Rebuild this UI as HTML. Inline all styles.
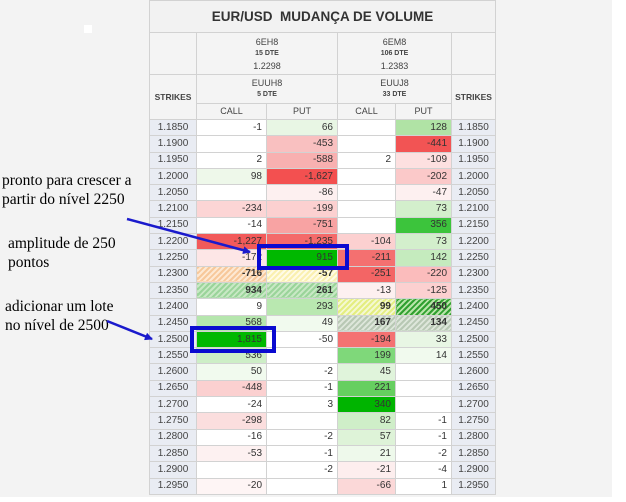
<!DOCTYPE html>
<html><head><meta charset="utf-8"><style>
body{margin:0;width:626px;height:502px;background:#fff;position:relative;overflow:hidden;font-family:"Liberation Sans",sans-serif}
#bg{position:absolute;left:0;top:0;width:612px;height:497px;background:#f3f3f3}
.h{position:absolute;box-sizing:border-box;border:1px solid #d2d2d2;background:#f4f4f4;color:#444;text-align:center;font-size:9px}
table{position:absolute;left:149px;top:119px;border-collapse:collapse;table-layout:fixed;font-size:10px;color:#333}
td{border:1px solid #d2d2d2;height:15.3px;padding:0 4px 0 0;text-align:right;background:#fff;line-height:14px;white-space:nowrap;overflow:hidden}
td.s{background:#e9ecf3;text-align:center;padding:0;color:#444}
.b{font-weight:bold}
.t{position:absolute;font-family:"Liberation Serif",serif;font-size:15.5px;color:#000;line-height:19px}
.box{position:absolute;border:4px solid #0a0ad0;box-sizing:border-box}
.so{background:repeating-linear-gradient(135deg,#f7c89a 0 2px,#fde8d2 2px 4px)}
.sy{background:repeating-linear-gradient(135deg,#faf0b0 0 2px,#fffbe6 2px 4px)}
.sg{background:repeating-linear-gradient(135deg,#9ad49a 0 2px,#c8e8c4 2px 4px)}
.syg{background:repeating-linear-gradient(135deg,#e4ee80 0 2px,#f4f8d0 2px 4px)}
.sdg{background:repeating-linear-gradient(135deg,#30a030 0 2px,#b8e4a8 2px 4px)}
.sgr{background:repeating-linear-gradient(135deg,#b8c8b4 0 2px,#dde6da 2px 4px)}
</style></head><body>
<div id="bg"></div>
<div style="position:absolute;left:84px;top:25px;width:8px;height:8px;background:#fff"></div>

<div class="h" style="left:149px;top:0;width:347px;height:33px;font-size:13.5px;font-weight:bold;line-height:31px;color:#333;background:#f2f2f2">EUR/USD&nbsp; MUDANÇA DE VOLUME</div>
<div class="h" style="left:149px;top:32px;width:48px;height:43px"></div>
<div class="h" style="left:196px;top:32px;width:142px;height:43px;padding-top:4px;line-height:10px">6EH8<br><span style="font-size:7px;font-weight:bold">15 DTE</span><br><span style="line-height:15px">1.2298</span></div>
<div class="h" style="left:337px;top:32px;width:115px;height:43px;padding-top:4px;line-height:10px">6EM8<br><span style="font-size:7px;font-weight:bold">106 DTE</span><br><span style="line-height:15px">1.2383</span></div>
<div class="h" style="left:451px;top:32px;width:45px;height:43px"></div>
<div class="h" style="left:149px;top:74px;width:48px;height:46px;font-weight:bold;line-height:44px;font-size:8.5px">STRIKES</div>
<div class="h" style="left:451px;top:74px;width:45px;height:46px;font-weight:bold;line-height:44px;font-size:8.5px">STRIKES</div>
<div class="h" style="left:196px;top:74px;width:142px;height:30px;padding-top:3px;line-height:10px">EUUH8<br><span style="font-size:7px;font-weight:bold">5 DTE</span></div>
<div class="h" style="left:337px;top:74px;width:115px;height:30px;padding-top:3px;line-height:10px">EUUJ8<br><span style="font-size:7px;font-weight:bold">33 DTE</span></div>
<div class="h" style="left:196px;top:103px;width:71px;height:17px;line-height:15px">CALL</div>
<div class="h" style="left:266px;top:103px;width:72px;height:17px;line-height:15px">PUT</div>
<div class="h" style="left:337px;top:103px;width:59px;height:17px;line-height:15px">CALL</div>
<div class="h" style="left:395px;top:103px;width:57px;height:17px;line-height:15px">PUT</div>

<table>
<colgroup><col style="width:47px"><col style="width:70px"><col style="width:71px"><col style="width:58px"><col style="width:56px"><col style="width:44px"></colgroup>
<tr><td class="s">1.1850</td><td>-1</td><td style="background:#e8f6e4">66</td><td></td><td style="background:#b0e3a5">128</td><td class="s">1.1850</td></tr>
<tr><td class="s">1.1900</td><td></td><td style="background:#f9c0c0">-453</td><td></td><td style="background:#f25454">-441</td><td class="s">1.1900</td></tr>
<tr><td class="s">1.1950</td><td>2</td><td style="background:#f8b0b0">-588</td><td>2</td><td style="background:#fde0e0">-109</td><td class="s">1.1950</td></tr>
<tr><td class="s">1.2000</td><td style="background:#eef8ea">98</td><td style="background:#f35050">-1,627</td><td></td><td style="background:#fbc9c9">-202</td><td class="s">1.2000</td></tr>
<tr><td class="s">1.2050</td><td></td><td style="background:#fdf0f0">-86</td><td></td><td style="background:#fdf0f0">-47</td><td class="s">1.2050</td></tr>
<tr><td class="s">1.2100</td><td style="background:#fcd5d5">-234</td><td style="background:#fcd0d0">-199</td><td></td><td style="background:#d3efcc">73</td><td class="s">1.2100</td></tr>
<tr><td class="s">1.2150</td><td>-14</td><td style="background:#f8a3a3">-751</td><td></td><td style="background:#3cc43c">356</td><td class="s">1.2150</td></tr>
<tr><td class="s">1.2200</td><td style="background:#f25a5a">-1,227</td><td style="background:#f46a6a">-1,235</td><td style="background:#fcd0d0">-104</td><td style="background:#d3efcc">73</td><td class="s">1.2200</td></tr>
<tr><td class="s">1.2250</td><td style="background:#fde6e6">-172</td><td style="background:#00b800">915</td><td style="background:#f47070">-211</td><td style="background:#c5ebbe">142</td><td class="s">1.2250</td></tr>
<tr><td class="s">1.2300</td><td class="so b">-716</td><td class="sy b">-57</td><td style="background:#f36565">-251</td><td style="background:#fbbcbc">-220</td><td class="s">1.2300</td></tr>
<tr><td class="s">1.2350</td><td class="sg b">934</td><td class="sg b">261</td><td style="background:#fdf0f0">-13</td><td style="background:#fcd0d0">-125</td><td class="s">1.2350</td></tr>
<tr><td class="s">1.2400</td><td>9</td><td style="background:#b9e8b0">293</td><td class="syg b">99</td><td class="sdg b">450</td><td class="s">1.2400</td></tr>
<tr><td class="s">1.2450</td><td style="background:#b5e6ad">568</td><td style="background:#f1faee">49</td><td class="sgr b">167</td><td class="sgr b">134</td><td class="s">1.2450</td></tr>
<tr><td class="s">1.2500</td><td style="background:#00b800">1,815</td><td>-50</td><td style="background:#f47272">-194</td><td style="background:#e8f6e4">33</td><td class="s">1.2500</td></tr>
<tr><td class="s">1.2550</td><td style="background:#cdeec6">536</td><td></td><td style="background:#7fd87a">199</td><td style="background:#f1faee">14</td><td class="s">1.2550</td></tr>
<tr><td class="s">1.2600</td><td style="background:#f1faee">50</td><td>-2</td><td style="background:#e0f4db">45</td><td></td><td class="s">1.2600</td></tr>
<tr><td class="s">1.2650</td><td style="background:#fbd0d0">-448</td><td>-1</td><td style="background:#66cf60">221</td><td></td><td class="s">1.2650</td></tr>
<tr><td class="s">1.2700</td><td>-24</td><td>3</td><td style="background:#00b400">340</td><td></td><td class="s">1.2700</td></tr>
<tr><td class="s">1.2750</td><td style="background:#fbdede">-298</td><td></td><td style="background:#cfeec8">82</td><td>-1</td><td class="s">1.2750</td></tr>
<tr><td class="s">1.2800</td><td>-16</td><td>-2</td><td style="background:#def3d8">57</td><td>-1</td><td class="s">1.2800</td></tr>
<tr><td class="s">1.2850</td><td style="background:#fdf1f1">-53</td><td>-1</td><td style="background:#eef9eb">21</td><td>-2</td><td class="s">1.2850</td></tr>
<tr><td class="s">1.2900</td><td></td><td>-2</td><td style="background:#fdeeee">-21</td><td>-4</td><td class="s">1.2900</td></tr>
<tr><td class="s">1.2950</td><td style="background:#fef5f5">-20</td><td></td><td style="background:#fbd8d8">-66</td><td>1</td><td class="s">1.2950</td></tr>
</table>

<div class="box" style="left:257px;top:244px;width:92px;height:26px"></div>
<div class="box" style="left:190px;top:326px;width:86px;height:27px"></div>

<div class="t" style="left:2px;top:171px">pronto para crescer a<br>partir do nível 2250</div>
<div class="t" style="left:8px;top:234px">amplitude de 250<br>pontos</div>
<div class="t" style="left:5px;top:297px">adicionar um lote<br>no nível de 2500</div>

<svg style="position:absolute;left:0;top:0" width="626" height="502">
<defs><marker id="a" markerWidth="8" markerHeight="8" refX="7" refY="4" orient="auto" markerUnits="userSpaceOnUse"><path d="M0,0 L8,4 L0,8 z" fill="#1a1acc"/></marker></defs>
<line x1="127" y1="219" x2="250" y2="252" stroke="#1a1acc" stroke-width="2.5" marker-end="url(#a)"/>
<line x1="107" y1="321" x2="152" y2="339" stroke="#1a1acc" stroke-width="2.5" marker-end="url(#a)"/>
</svg>
</body></html>
